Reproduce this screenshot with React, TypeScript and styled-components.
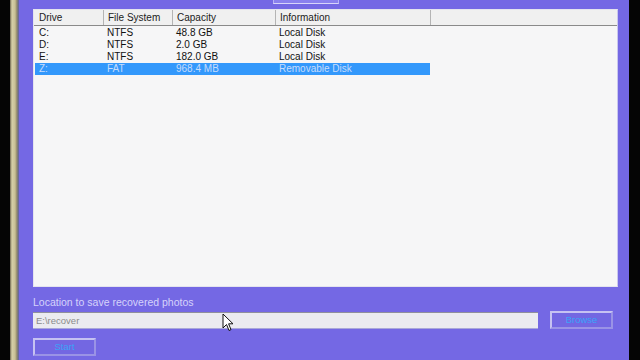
import * as React from 'react';
import styled, { createGlobalStyle } from 'styled-components';

const GlobalStyle = createGlobalStyle`
  html, body {
    margin: 0;
    padding: 0;
    background: #000;
    overflow: hidden;
  }
  * {
    box-sizing: border-box;
  }
`;

const purple = '#7468e4';
const uiFont = `'Liberation Sans', Arial, sans-serif`;

const Screen = styled.div`
  position: relative;
  display: flex;
  width: 640px;
  height: 360px;
  background: #000;
  font-family: ${uiFont};
`;

const BlackEdge = styled.div<{ $w: number }>`
  width: ${(p) => p.$w}px;
  flex-shrink: 0;
  background: #050505;
`;

const TanFrame = styled.div`
  width: 9px;
  flex-shrink: 0;
  background: linear-gradient(90deg, #6d6650 0, #d6cfa8 2px, #c9c096 5px, #8f876a 7px, #5b5fa8 9px);
`;

const Window = styled.div`
  width: 610px;
  flex-shrink: 0;
  background: ${purple};
  display: flex;
  flex-direction: column;
  padding: 0 11px 0 14px;
`;

const TabStrip = styled.div`
  height: 9px;
  padding-left: 240px;
`;

const Tab = styled.div`
  width: 66px;
  height: 4px;
  background: #8a80ee;
  border: 1px solid #b8b2f6;
  border-top: none;
  border-bottom: 1px solid #d8d4fa;
`;

const ListView = styled.div`
  height: 278px;
  background: #f6f6f7;
  border: 1px solid #e4e4ee;
  border-right: 1px solid #c9c6ee;
  padding: 0 1px;
  font-size: 10px;
  color: #111;
`;

const Header = styled.div`
  display: flex;
  height: 16px;
  background: #f0f0f0;
  border-bottom: 1px solid #8a8a8a;
  margin: 0 -1px 1px;
  padding-left: 1px;
`;

const HeadCell = styled.div<{ $w?: number }>`
  ${(p) => (p.$w ? `width: ${p.$w}px;` : 'flex: 1;')}
  border-right: 1px solid #b4b4b4;
  padding-left: 4px;
  line-height: 15px;
  color: #222;
  &:last-child {
    border-right: none;
  }
`;

const Row = styled.div<{ $selected?: boolean }>`
  display: flex;
  width: 395px;
  height: 12px;
  line-height: 12px;
  background: ${(p) => (p.$selected ? '#3398fb' : 'transparent')};
  color: ${(p) => (p.$selected ? '#c7dcfb' : '#111')};
`;

const Cell = styled.div<{ $w: number }>`
  width: ${(p) => p.$w}px;
  padding-left: 4px;
  white-space: nowrap;
`;

const Label = styled.div`
  margin-top: 9px;
  height: 14px;
  font-size: 10.5px;
  color: #d6d3fb;
`;

const PathRow = styled.div`
  display: flex;
  align-items: center;
  gap: 12px;
  margin-top: 1px;
`;

const PathInput = styled.div`
  width: 505px;
  height: 17px;
  background: #ebebf0;
  border-top: 1px solid #8f8f9c;
  border-bottom: 1px solid #a9a7d8;
  padding-left: 3px;
  font-size: 9.5px;
  line-height: 15px;
  color: #8b8b8b;
`;

const Button = styled.div`
  width: 63px;
  height: 18px;
  border: 2px solid #c6c2f2;
  border-right-color: #9a93e6;
  border-bottom-color: #9a93e6;
  background: #7367e2;
  color: #3aa3f8;
  font-size: 9.5px;
  text-align: center;
  line-height: 14px;
`;

const StartRow = styled.div`
  margin-top: 9px;
`;

const Cursor = styled.svg`
  position: absolute;
  left: 222px;
  top: 313px;
`;

const cols = [68, 69, 103, 155];

const drives = [
  ['C:', 'NTFS', '48.8 GB', 'Local Disk'],
  ['D:', 'NTFS', '2.0 GB', 'Local Disk'],
  ['E:', 'NTFS', '182.0 GB', 'Local Disk'],
  ['Z:', 'FAT', '968.4 MB', 'Removable Disk'],
];

export default function App() {
  return (
    <>
      <GlobalStyle />
      <Screen>
        <BlackEdge $w={10} />
        <TanFrame />
        <Window>
          <TabStrip>
            <Tab />
          </TabStrip>
          <ListView>
            <Header>
              <HeadCell $w={cols[0] + 1}>Drive</HeadCell>
              <HeadCell $w={cols[1]}>File System</HeadCell>
              <HeadCell $w={cols[2]}>Capacity</HeadCell>
              <HeadCell $w={cols[3]}>Information</HeadCell>
              <HeadCell />
            </Header>
            {drives.map((d, i) => (
              <Row key={d[0]} $selected={i === drives.length - 1}>
                {d.map((v, j) => (
                  <Cell key={j} $w={cols[j]}>
                    {v}
                  </Cell>
                ))}
              </Row>
            ))}
          </ListView>
          <Label>Location to save recovered photos</Label>
          <PathRow>
            <PathInput>E:\recover</PathInput>
            <Button>Browse</Button>
          </PathRow>
          <StartRow>
            <Button>Start</Button>
          </StartRow>
        </Window>
        <BlackEdge $w={11} />
        <Cursor width="12" height="19" viewBox="0 0 12 19">
          <path d="M1 1 L1 15 L4.5 11.5 L7 17.5 L9 16.6 L6.6 10.8 L11 10.8 Z" fill="#fff" stroke="#111" strokeWidth="1" strokeLinejoin="round" />
        </Cursor>
      </Screen>
    </>
  );
}
